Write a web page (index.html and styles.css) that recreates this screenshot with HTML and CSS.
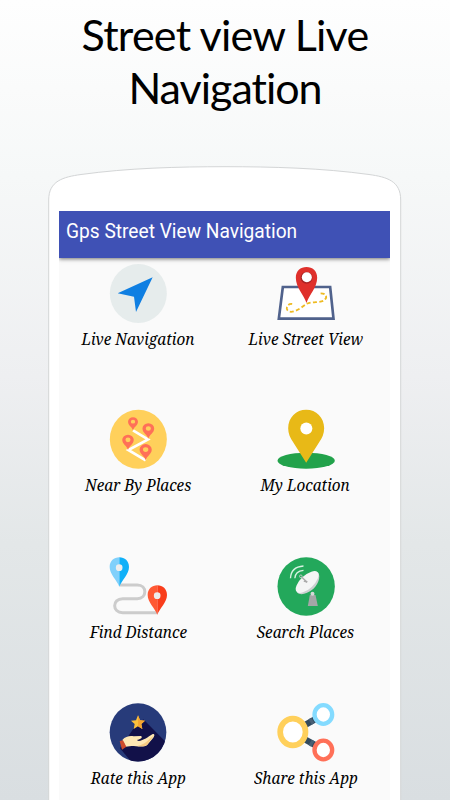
FILE: index.html
```html
<!DOCTYPE html>
<html lang="en">
<head>
<meta charset="utf-8">
<meta name="viewport" content="width=device-width, initial-scale=1.0">
<title>Gps Street View Navigation</title>
<link rel="stylesheet" href="styles.css">
</head>
<body>
<h1><span class="line1">Street view Live</span><br><span class="line2">Navigation</span></h1>

<div class="phone">
  <svg class="frame" width="354" height="634" viewBox="0 0 354 634">
    <path d="M.7 640V34C.7 15 15 11 33 8.500C80 2 130 .7 177 .7S274 2 321 8.500C339 11 352.700 15 352.700 34V640" fill="#fff" stroke="#d3d5d6"/>
  </svg>
  <div class="screen">
    <header><span>Gps Street View Navigation</span></header>
    <main>
      <div class="item">
        <svg viewBox="102 24 174 180">
          <ellipse cx="190" cy="115.500" rx="85.500" ry="88.500" fill="#e6ecec"/>
          <path d="M233 67L183 171L177 125L128 115Z" fill="#0f7fe2"/>
        </svg>
        <p>Live Navigation</p>
      </div>
      <div class="item">
        <svg viewBox="109.5 24 174 180">
          <path d="M127 96H269L279 191H115Z" fill="#fff" stroke="#50628c" stroke-width="8"/>
          <path d="M155 147C140 145 134 161 143 168C156 177 180 160 197 147C217 138 245 145 254 133C263 121 252 114 238 115" fill="none" stroke="#eebb22" stroke-width="5.500" stroke-dasharray="12 7"/>
          <path d="M198 144C190 118 166 98 166 68C166 48 180 36 198 36S230 48 230 68C230 98 206 118 198 144Z" fill="#df302b"/>
          <circle cx="198" cy="68" r="18" fill="#ab2424"/>
          <circle cx="199" cy="67" r="15" fill="#fff"/>
        </svg>
        <p>Live Street View</p>
      </div>
      <div class="item">
        <svg viewBox="102 28 174 180">
          <defs>
            <path id="pin" d="M0 0C-3-13-16-17-16-31A16 16 0 0 1 16-31C16-17 3-13 0 0ZM-7-31A7 7 0 0 0 7-31A7 7 0 0 0-7-31Z" fill="#ff7058" fill-rule="evenodd"/>
          </defs>
          <ellipse cx="190" cy="119" rx="85.500" ry="88.500" fill="#ffd05b"/>
          <path d="M174 92L219 119L160 151L212 182" fill="none" stroke="#fff" stroke-width="8"/>
          <use href="#pin" transform="translate(174 92) scale(.93 .84)"/>
          <use href="#pin" transform="translate(220 117) scale(1.1 .98)"/>
          <use href="#pin" transform="translate(159 151) scale(1.08 .98)"/>
          <use href="#pin" transform="translate(212 182) scale(1.14 1.04)"/>
        </svg>
        <p>Near By Places</p>
      </div>
      <div class="item">
        <svg viewBox="109.5 28 174 180">
          <ellipse cx="197" cy="183" rx="86" ry="24" fill="#22a24b"/>
          <path d="M197 189L158 128C149 115 143 102 143 86C143 53 167 30 197 30S251 53 251 86C251 102 245 115 236 128Z" fill="#e8b917"/>
          <circle cx="197.500" cy="86.500" r="18" fill="#fff"/>
        </svg>
        <p>My Location</p>
      </div>
      <div class="item">
        <svg viewBox="102 23 174 180">
          <path d="M134 110H187C217 110 217 151 187 151H143C111 151 111 193 143 193H246" fill="none" stroke="#ccc" stroke-width="9"/>
          <path d="M133 115C126 96 104 78 104 56C104 38 117 27 133 27Z" fill="#80d0fb"/>
          <path d="M133 115C140 96 162 78 162 56C162 38 149 27 133 27Z" fill="#10b0f8"/>
          <circle cx="132.500" cy="58" r="10" fill="#ededed"/>
          <path d="M247 199C240 180 218 162 218 140C218 122 231 111 247 111Z" fill="#ff5934"/>
          <path d="M247 199C254 180 276 162 276 140C276 122 263 111 247 111Z" fill="#f93d1b"/>
          <circle cx="246.500" cy="142" r="10" fill="#ededed"/>
        </svg>
        <p>Find Distance</p>
      </div>
      <div class="item">
        <svg viewBox="109.5 23 174 180">
          <ellipse cx="197" cy="114.500" rx="86" ry="88" fill="#23a85b"/>
          <path d="M150 90Q151 56 189 53M163 90Q164 68 189 66" fill="none" stroke="#d8f2e2" stroke-width="4"/>
          <path d="M208 140H225L232 173H202Z" fill="#a4a6a7"/>
          <circle cx="216" cy="136" r="6" fill="#d5d8d8"/>
          <path d="M232 71C243 86 232 112 213 126C197 138 177 142 169 131Z" fill="#cbcfd0"/>
          <ellipse cx="200" cy="101" rx="43" ry="20" transform="rotate(-43 200 101)" fill="#f4f5f5"/>
          <path d="M184 87L200 102" stroke="#aaa" stroke-width="4"/>
          <path d="M190 98L200 101" stroke="#aaa" stroke-width="5"/>
          <circle cx="181" cy="84" r="4" fill="#23a85b" stroke="#c2c7c6" stroke-width="3"/>
        </svg>
        <p>Search Places</p>
      </div>
      <div class="item">
        <svg viewBox="101 21 174 180">
          <defs><clipPath id="disc"><ellipse cx="188" cy="112" rx="85" ry="87.500"/></clipPath></defs>
          <g clip-path="url(#disc)">
            <path d="M100 20H280V205H100Z" fill="#273b7a"/>
            <path d="M204 73L290 160V215H180L134 160L174 101Z" fill="#121149"/>
          </g>
          <path d="M141 135C151 124 163 122 175 124L197 123C203 127 197 133 184 135L190 138C205 137 218 126 231 118C238 115 239 122 234 128L216 149C207 158 184 153 169 153L151 155Z" fill="#ffe8b5"/>
          <path d="M188 152C207 151 221 132 236 121L216 149C208 156 200 153 188 154Z" fill="#f7cb83"/>
          <path d="M133 138L143 136L153 155L140 164Z" fill="#cf4c2c"/>
          <path d="M188 61L194 76L209 77L198 87L201 102L188 94L175 102L178 87L167 77L182 76Z" fill="#fcc13c"/>
          <path d="M188 61L194 76L209 77L198 87L201 102L188 94Z" fill="#f5a532"/>
        </svg>
        <p>Rate this App</p>
      </div>
      <div class="item">
        <svg viewBox="109.5 21 174 180">
          <path d="M190 92L225 72M190 131L225 151" stroke="#324a5e" stroke-width="19"/>
          <path d="M209 81L217 76M209 142L217 147" stroke="#496075" stroke-width="19"/>
          <ellipse cx="157" cy="111" rx="38" ry="40" fill="#fff" stroke="#ffd05b" stroke-width="17"/>
          <ellipse cx="248.500" cy="58.500" rx="26.500" ry="28" fill="#fff" stroke="#84dbff" stroke-width="13"/>
          <ellipse cx="248.500" cy="165" rx="26.500" ry="28" fill="#fff" stroke="#ff7058" stroke-width="13"/>
        </svg>
        <p>Share this App</p>
      </div>
    </main>
  </div>
</div>
</body>
</html>
```
FILE: styles.css
```css
* { box-sizing: border-box; }
body { margin: 0; height: 800px; overflow: hidden; background: linear-gradient(#fefefe, #f6f8f8 22%, #eeeff1 47%, #e3e7e8 68%, #d9dee1); font-family: Roboto, sans-serif; }
h1 { margin: 0; padding-top: 8px; height: 166px; text-align: center; font-family: Lato, sans-serif; font-size: 43px; font-weight: 400; line-height: 53px; color: #000; }
.line1 { letter-spacing: -0.75px; }
.line2 { letter-spacing: -1px; }
.phone { position: relative; width: 354px; height: 634px; margin-left: 48px; padding: 45px 11px 0; }
.frame { position: absolute; left: 0; top: 0; }
.screen { position: relative; width: 331px; height: 589px; overflow: hidden; background: #fafafa; }
header { position: relative; height: 47px; padding-left: 7px; background: #3f51b5; color: #fff; font-size: 20px; line-height: 40px; box-shadow: 0 1px 4px rgba(0,0,0,0.55); }
header span { display: inline-block; transform: scaleX(0.957); transform-origin: left; }
main { display: grid; grid-template-columns: 158px 167px; column-gap: 5px; grid-template-rows: repeat(3, 146.33px) auto; padding-top: 5px; }
.item { display: flex; flex-direction: column; align-items: center; }
.item svg { width: 58px; height: 60px; }
.item p { margin: 4px 0 0; font-family: "Noto Serif", "DejaVu Serif", serif; font-style: italic; font-size: 16.5px; line-height: 23px; white-space: nowrap; color: #000; transform: scaleX(0.928); }
```
